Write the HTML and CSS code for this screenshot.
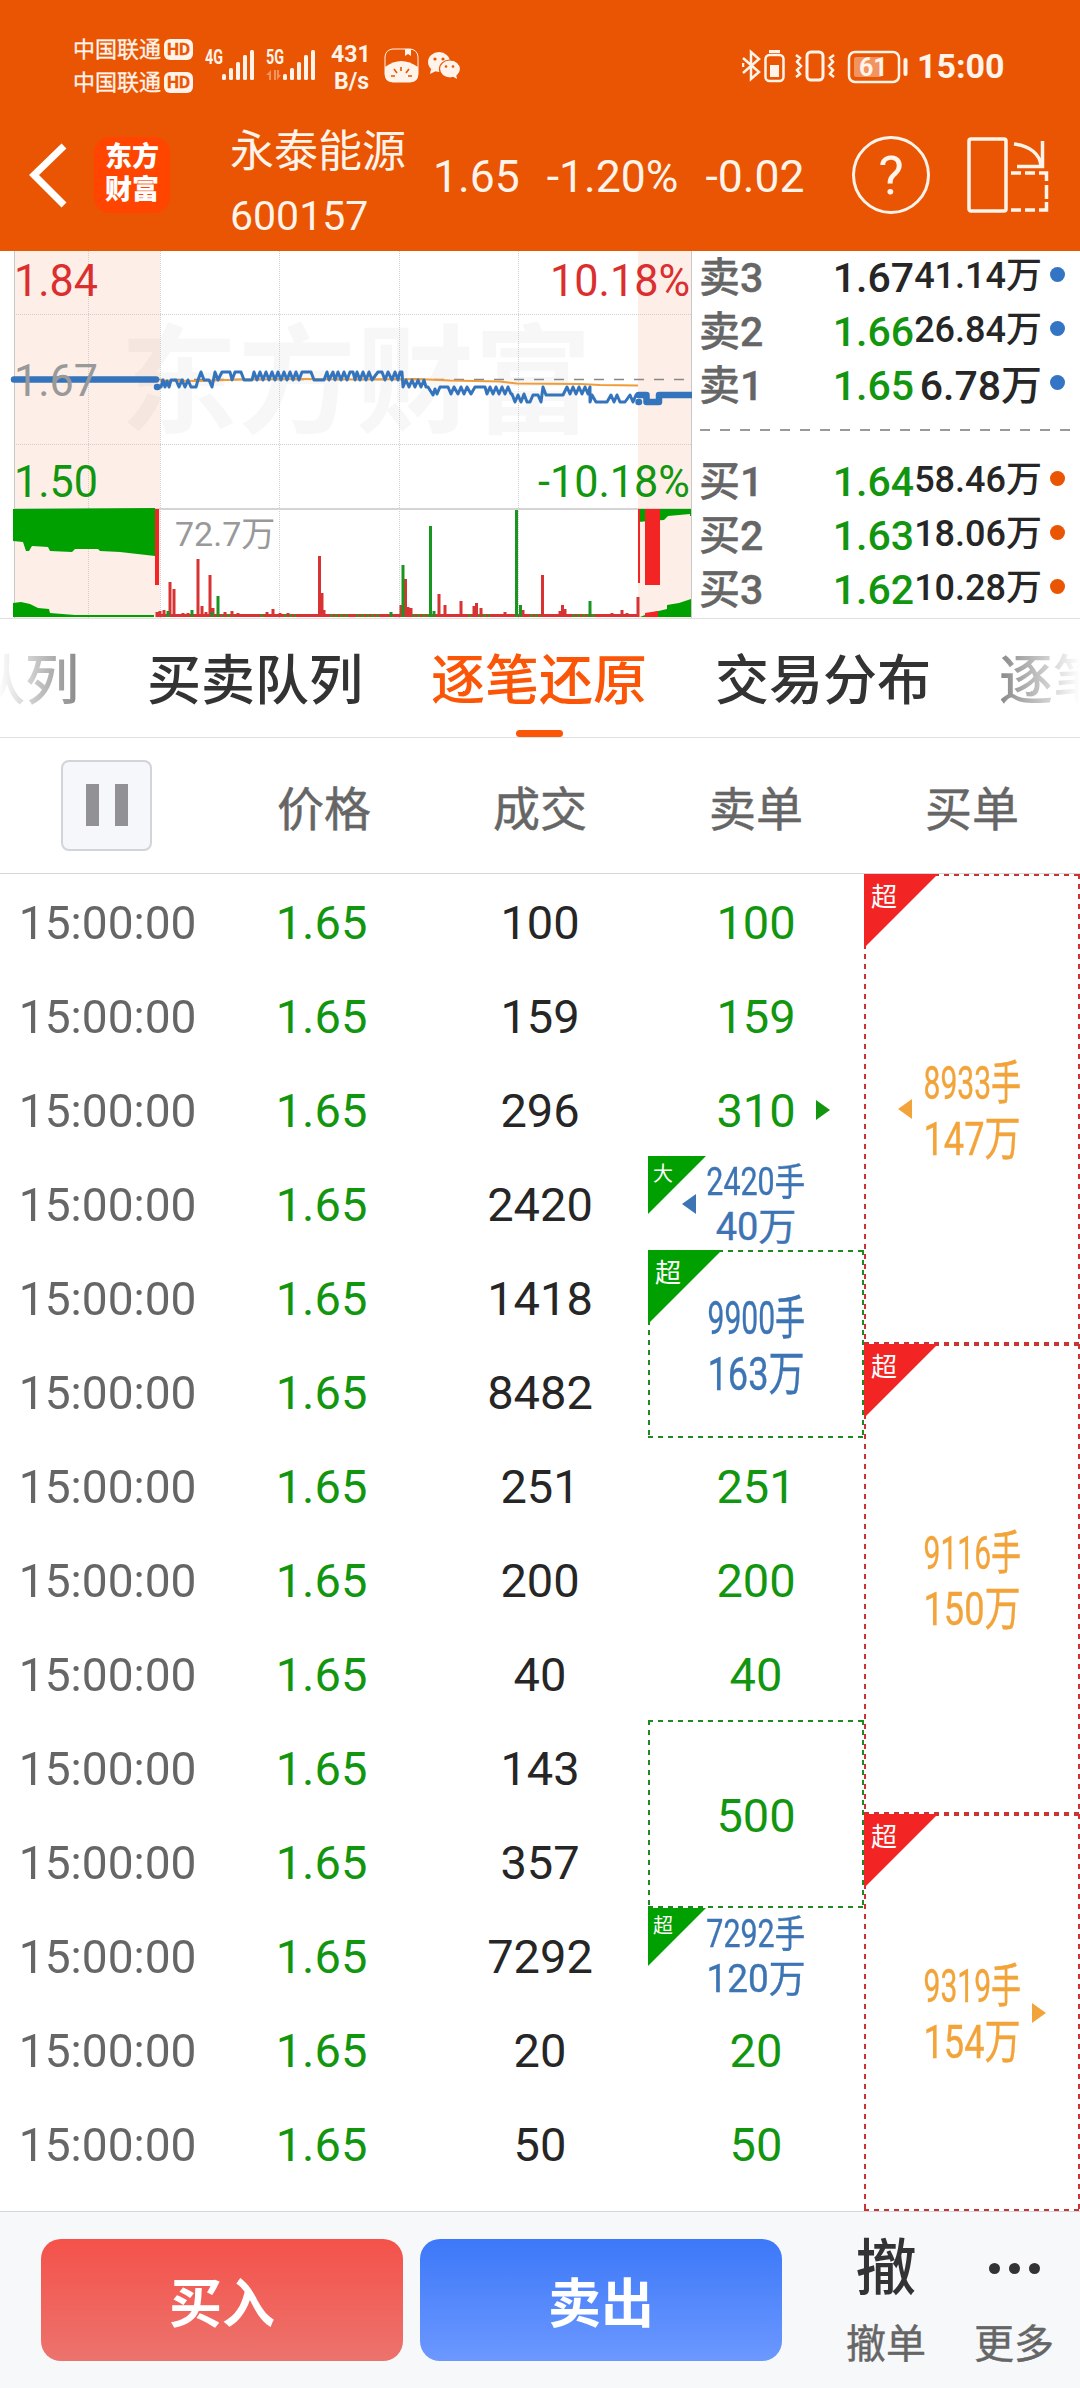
FILE: index.html
```html
<!DOCTYPE html>
<html lang="zh-CN">
<head>
    <meta charset="UTF-8">
    <meta name="viewport" content="width=device-width, initial-scale=1.0">
    <title>永泰能源 600157</title>
    <link rel="stylesheet" href="styles.css">
</head>
<body>
    <header class="header">
        <div class="status-bar">
            <div class="carriers">
                <div class="carrier">中国联通<span class="hd">HD</span></div>
                <div class="carrier">中国联通<span class="hd">HD</span></div>
            </div>
            <svg class="signals" width="114" height="36" viewBox="0 0 114 36" fill="#fff3ea">
                <text x="0" y="17" class="net" textLength="18" lengthAdjust="spacingAndGlyphs">4G</text>
                <rect x="17" y="27" width="4" height="6" rx="1.5"/>
                <rect x="24" y="21" width="4" height="12" rx="1.5"/>
                <rect x="31" y="15" width="4" height="18" rx="1.5"/>
                <rect x="38" y="8" width="4" height="25" rx="1.5"/>
                <rect x="45" y="3" width="4" height="30" rx="1.5"/>
                <text x="61" y="17" class="net" textLength="18" lengthAdjust="spacingAndGlyphs">5G</text>
                <path d="M66 33V23l-5 5h3v5zM69 23v10h2V23zM72 23v10l4-5h-2v-5z" opacity=".4"/>
                <rect x="78" y="27" width="4" height="6" rx="1.5"/>
                <rect x="85" y="21" width="4" height="12" rx="1.5"/>
                <rect x="92" y="15" width="4" height="18" rx="1.5"/>
                <rect x="99" y="8" width="4" height="25" rx="1.5"/>
                <rect x="106" y="3" width="4" height="30" rx="1.5"/>
            </svg>
            <div class="speed">431<br>B/s</div>
            <svg class="apps" width="78" height="36" viewBox="0 0 78 36" fill="#fff3ea">
                <rect x="1" y="2" width="33" height="33" rx="8" fill="none" stroke="#fff3ea"/>
                <path d="M21 2h6v7l-3-2-3 2z"/>
                <path d="M1 20Q17 8 34 20v8q0 7-7 7H8q-7 0-7-7z"/>
                <path d="M17 20v4M10 22l3 4M25 22l-3 4M7 29h4M28 29h-4" stroke="#e95502" stroke-width="1.6"/>
                <ellipse cx="55" cy="15" rx="11" ry="10"/>
                <path d="M47 22l-1 5 6-3z"/>
                <ellipse cx="66" cy="22" rx="10.5" ry="9" stroke="#e95502" stroke-width="1.2"/>
                <path d="M68 29l5 3-1-5z"/>
                <g fill="#e95502"><circle cx="51" cy="12" r="1.6"/><circle cx="59" cy="12" r="1.6"/><circle cx="62" cy="19.5" r="1.3"/><circle cx="69" cy="19.5" r="1.3"/></g>
            </svg>
            <svg class="devices" width="166" height="36" viewBox="0 0 166 36" fill="none" stroke="#fff3ea" stroke-width="2.5">
                <path d="M1 10l16 14-8 7V4l8 7L1 25M1 15v4"/>
                <rect x="23.5" y="7" width="18" height="26" rx="4"/>
                <path d="M27 3.5h11" stroke-width="3"/>
                <rect x="28" y="17" width="9" height="12" fill="#fff3ea" stroke="none"/>
                <rect x="65" y="4" width="16" height="28" rx="4" stroke-width="3"/>
                <path d="M54 7l4 3-3 4 4 4-4 4 3 4-4 3M92 7l-4 3 3 4-4 4 4 4-3 4 4 3"/>
                <rect x="107" y="4" width="50" height="30" rx="6"/>
                <rect x="112" y="9" width="28" height="20" rx="2" fill="#fff3ea" stroke="none" opacity=".4"/>
                <path d="M163.5 12v14" stroke-width="4" stroke-linecap="round"/>
                <text x="117" y="27.5" class="level">61</text>
            </svg>
            <div class="clock">15:00</div>
        </div>
        <div class="title-bar">
            <svg class="back" width="40" height="66" viewBox="0 0 40 66" fill="none" stroke="#fff" stroke-width="7">
                <path d="M36 4L6 33l30 30"/>
            </svg>
            <div class="logo">东方<br>财富</div>
            <div class="stock">
                <div class="stock-name">永泰能源</div>
                <div class="stock-code">600157</div>
            </div>
            <div class="quote">
                <span>1.65</span>
                <span>-1.20%</span>
                <span>-0.02</span>
            </div>
            <div class="help">?</div>
            <svg class="rotate" width="84" height="78" viewBox="0 0 84 78" fill="none" stroke="#fff3ea" stroke-width="3.5">
                <rect x="2" y="3" width="37" height="72" rx="2"/>
                <path d="M47 8c16 2 26 10 27 22M75.5 5v25.500H50" stroke-width="3.5"/>
                <path d="M44 37h10M58 37h10M72 37h7.500v8M79.500 49v14M79.500 66v8H72M68 74H58M54 74H44"/>
            </svg>
        </div>
    </header>

    <section class="market">
        <svg class="chart" width="692" height="367" viewBox="0 251 692 367">
            <!-- call auction periods -->
            <path d="M14 251h146v367H14zM638 251h53v367h-53z" fill="#fdeee7"/>
            <text class="watermark" x="120" y="424">东方财富</text>
            <path d="M88.500 251v367M160.500 251v367M279.500 251v367M399.500 251v367M518.500 251v367M14 314.500h677M14 444.500h677" stroke="#cfcfcf" stroke-dasharray="1 1"/>
            <path d="M14.500 251v367M691.500 251v367" stroke="#c8c8c8"/>
            <path d="M14 509h677" stroke="#d4d4d4" stroke-width="2"/>
            <path d="M154 379.500h537" stroke="#888" stroke-width="1.5" stroke-dasharray="10 10"/>
            <path d="M160 380.500L200 381l40-1.500 60-.5 60 .5 57-.5 33 1.500 50 1 17 2 63 .5 20 1 38 .5" fill="none" stroke="#f09c38" stroke-width="2"/>
            <polyline class="price" points="157,387 161,387 163,380 165,387 167,381 169,387 171,380 176,380 179,387 182,380 185,387 188,380 191,387 196,387 198,380 201,372 204,380 209,380 212,387 215,372 218,380 222,372 230,372 232,380 235,372 241,372 244,380 252,380 254,372 257,380 260,372 263,380 266,372 269,380 272,372 275,380 278,372 281,380 284,372 287,380 290,372 293,380 296,372 299,380 302,372 311,372 314,380 324,380 327,372 329,380 333,372 335,380 338,372 341,380 344,372 347,380 350,372 353,372 355,380 357,372 360,380 363,372 366,380 369,372 372,380 378,372 382,372 385,380 388,372 392,380 395,372 398,380 400,372 402,372 403,387 406,380 409,387 412,380 415,387 418,380 421,387 424,380 426,387 428,387 433,395 435,389 437,394 440,387 448,387 451,394 454,387 458,394 461,387 464,394 467,387 471,394 475,387 485,387 487,394 490,387 493,394 496,387 499,394 502,387 505,394 508,387 511,394 512,394 515,402 518,395 521,402 524,394 527,402 530,402 533,395 538,395 541,402 543,387 546,395 563,395 567,387 570,394 573,387 576,394 579,387 582,394 585,387 588,394 590,387 590,402 592,395 596,402 607,402 611,395 614,402 617,395 620,402 625,402 630,395 633,402 636,395 638,395"/>
            <g class="auction">
                <path d="M14 379.500h142M157 387h.5M638.500 395h8v7h12.500v-7h32M638.500 402h.5"/>
            </g>

            <!-- volume -->
            <path d="M13 509v32l10 1 3 9h3l3-5 16 1 2 4 22 1 3-3h23l2 2 20 1 35 4v-48zM13 617v-14l8-1 9 2 8 4 11 1 1 4 25 2h79v2zM638 509v13l12-1 14-1 4-4 22-2v2h1v-7zM640 617l10-4 17-4v-4l12-2 12-4v18z" fill="#00a000"/>
            <path d="M155 509h4v76h-4zM638 509h2v74h-2zM645 509h15v76h-15zM645 613l13-2v6h-13z" fill="#f22424"/>
            <path d="M159 615.500h480" stroke="#d83232" stroke-width="3"/>
            <path d="M222 615.500h12M260 615.500h10M284 615.500h12M330 615.500h18M356 615.500h24M412 615.500h20M468 615.500h22M530 615.500h14M572 615.500h24" stroke="#4a8a1c" stroke-width="3" stroke-dasharray="3 2"/>
            <path d="M157 617v-5M160 617v-6M164 617v-7M170 617v-35M174 617v-28M183 617v-4M188 617v-4M198 617v-58M202 617v-11M206 617v-5M210 617v-42M213 617v-9M225 617v-5M232 617v-6M238 617v-4M267 617v-5M273 617v-8M280 617v-4M288 617v-4M319.500 617v-61M322 617v-24M324 617v-7M401 617v-12M405.500 617v-38M408 617v-10M411 617v-9M439 617v-23M445 617v-12M461 617v-16M474 617v-11M476.500 617v-14M481 617v-9M505 617v-5M523 617v-7M542.500 617v-42M560 617v-6M562.500 617v-12M565 617v-8M612 617v-4M622 617v-7M627 617v-4M638 617v-20" stroke="#d83232" stroke-width="3"/>
            <path d="M168 617v-6M192 617v-7M212 617v-5M218 617v-21M391 617v-5M403 617v-52M430.500 617v-91M434 617v-6M516.500 617v-107M520.500 617v-12M590 617v-16" stroke="#1a9620" stroke-width="3"/>

            <text class="label red" x="14" y="296" textLength="84" lengthAdjust="spacingAndGlyphs">1.84</text>
            <text class="label gray" x="14" y="396" textLength="84" lengthAdjust="spacingAndGlyphs">1.67</text>
            <text class="label green" x="14" y="497" textLength="84" lengthAdjust="spacingAndGlyphs">1.50</text>
            <text class="label red" x="550" y="296" textLength="140" lengthAdjust="spacingAndGlyphs">10.18%</text>
            <text class="label green" x="538" y="497" textLength="152" lengthAdjust="spacingAndGlyphs">-10.18%</text>
            <text class="label small gray" x="175" y="546">72.7万</text>
        </svg>
        <div class="order-book">
            <div class="level-row"><span class="side">卖3</span><span class="price-cell">1.67</span><span class="amount">41.14万</span><i class="dot"></i></div>
            <div class="level-row"><span class="side">卖2</span><span class="price-cell down">1.66</span><span class="amount">26.84万</span><i class="dot"></i></div>
            <div class="level-row"><span class="side">卖1</span><span class="price-cell down">1.65</span><span class="amount wide">6.78万</span><i class="dot"></i></div>
            <div class="book-divider"></div>
            <div class="level-row"><span class="side">买1</span><span class="price-cell down">1.64</span><span class="amount">58.46万</span><i class="dot buy"></i></div>
            <div class="level-row"><span class="side">买2</span><span class="price-cell down">1.63</span><span class="amount">18.06万</span><i class="dot buy"></i></div>
            <div class="level-row"><span class="side">买3</span><span class="price-cell down">1.62</span><span class="amount">10.28万</span><i class="dot buy"></i></div>
        </div>
    </section>

    <nav class="tabs">
        <span class="tab fade-left">队列</span>
        <span class="tab">买卖队列</span>
        <span class="tab active">逐笔还原</span>
        <span class="tab">交易分布</span>
        <span class="tab fade-right">逐笔</span>
    </nav>

    <div class="table-head">
        <div class="head-cell"><button class="pause"><i></i><i></i></button></div>
        <div class="head-cell">价格</div>
        <div class="head-cell">成交</div>
        <div class="head-cell">卖单</div>
        <div class="head-cell">买单</div>
    </div>

    <main class="ticks">
        <div class="col time">
            <div class="cell"><span>15:00:00</span></div>
            <div class="cell"><span>15:00:00</span></div>
            <div class="cell"><span>15:00:00</span></div>
            <div class="cell"><span>15:00:00</span></div>
            <div class="cell"><span>15:00:00</span></div>
            <div class="cell"><span>15:00:00</span></div>
            <div class="cell"><span>15:00:00</span></div>
            <div class="cell"><span>15:00:00</span></div>
            <div class="cell"><span>15:00:00</span></div>
            <div class="cell"><span>15:00:00</span></div>
            <div class="cell"><span>15:00:00</span></div>
            <div class="cell"><span>15:00:00</span></div>
            <div class="cell"><span>15:00:00</span></div>
            <div class="cell"><span>15:00:00</span></div>
        </div>
        <div class="col last-price down">
            <div class="cell">1.65</div>
            <div class="cell">1.65</div>
            <div class="cell">1.65</div>
            <div class="cell">1.65</div>
            <div class="cell">1.65</div>
            <div class="cell">1.65</div>
            <div class="cell">1.65</div>
            <div class="cell">1.65</div>
            <div class="cell">1.65</div>
            <div class="cell">1.65</div>
            <div class="cell">1.65</div>
            <div class="cell">1.65</div>
            <div class="cell">1.65</div>
            <div class="cell">1.65</div>
        </div>
        <div class="col">
            <div class="cell">100</div>
            <div class="cell">159</div>
            <div class="cell">296</div>
            <div class="cell">2420</div>
            <div class="cell">1418</div>
            <div class="cell">8482</div>
            <div class="cell">251</div>
            <div class="cell">200</div>
            <div class="cell">40</div>
            <div class="cell">143</div>
            <div class="cell">357</div>
            <div class="cell">7292</div>
            <div class="cell">20</div>
            <div class="cell">50</div>
        </div>
        <div class="col down">
            <div class="cell">100</div>
            <div class="cell">159</div>
            <div class="cell">310<i class="arrow right sell-next"></i></div>
            <div class="cell big compact">
                <b class="flag">大</b><i class="arrow left sell-prev"></i>
                <span class="hand">2420手</span><span>40万</span>
            </div>
            <div class="cell big boxed two">
                <b class="flag">超</b>
                <span class="hand">9900手</span><span class="money">163万</span>
            </div>
            <div class="cell">251</div>
            <div class="cell">200</div>
            <div class="cell">40</div>
            <div class="cell boxed two">500</div>
            <div class="cell big compact">
                <b class="flag">超</b>
                <span class="hand">7292手</span><span class="money">120万</span>
            </div>
            <div class="cell">20</div>
            <div class="cell">50</div>
        </div>
        <div class="col buys">
            <div class="cell big boxed five">
                <b class="flag">超</b><i class="arrow left buy-prev"></i>
                <span class="hand">8933手</span><span class="money">147万</span>
            </div>
            <div class="cell big boxed five">
                <b class="flag">超</b>
                <span class="hand">9116手</span><span class="money">150万</span>
            </div>
            <div class="cell big boxed rest">
                <b class="flag">超</b><i class="arrow right buy-next"></i>
                <span class="hand">9319手</span><span class="money">154万</span>
            </div>
        </div>
    </main>

    <footer class="bottom-bar">
        <button class="trade buy-btn">买入</button>
        <button class="trade sell-btn">卖出</button>
        <div class="action">
            <div class="action-icon">撤</div>
            <div class="action-label">撤单</div>
        </div>
        <div class="action more">
            <div class="action-icon"><i></i><i></i><i></i></div>
            <div class="action-label">更多</div>
        </div>
    </footer>
</body>
</html>
```

FILE: styles.css
```css
* { box-sizing: border-box; }

body {
    margin: 0;
    width: 1080px;
    height: 2388px;
    overflow: hidden;
    background: #fff;
    color: #262626;
    font-family: Roboto, "Noto Sans CJK SC", sans-serif;
}

button {
    border: none;
    font-family: inherit;
    padding: 0;
}

svg { display: block; flex-shrink: 0; }

/* header */
.header {
    height: 251px;
    background: #e95502;
    color: #fff3ea;
}

.status-bar {
    height: 100px;
    padding: 33px 70px 0 73px;
    display: flex;
    align-items: flex-start;
}

.carriers { flex-shrink: 0; width: 121px; }

.carrier {
    display: flex;
    align-items: center;
    height: 33px;
    font-size: 22px;
    line-height: 33px;
    white-space: nowrap;
    -webkit-text-stroke: 0.3px;
}

.hd {
    flex-shrink: 0;
    width: 29px;
    height: 21px;
    margin-left: 3px;
    border-radius: 6px;
    background: #fff3ea;
    color: #e95502;
    font-size: 17px;
    font-weight: bold;
    line-height: 21px;
    text-align: center;
}

.signals { margin: 14px 0 0 11px; }
.net { font-size: 20px; font-weight: bold; }

.speed {
    width: 38px;
    margin: 8px 0 0 12px;
    font-size: 23px;
    font-weight: 700;
    line-height: 27px;
    text-align: right;
}

.apps { margin: 14px 0 0 15px; }
.devices { margin: 15px 0 0 280px; }

.level {
    fill: #fff3ea;
    stroke: none;
    font-size: 25px;
    font-weight: bold;
}

.clock {
    margin: 13px 0 0 9px;
    font-size: 34px;
    font-weight: 700;
    line-height: 40px;
}

.title-bar {
    height: 151px;
    padding-left: 28px;
    display: flex;
}

.back { margin-top: 42px; }

.logo {
    width: 76px;
    height: 76px;
    margin: 37px 0 0 26px;
    padding-top: 4px;
    border-radius: 16px;
    background: #ff4500;
    color: #fff;
    font-size: 27px;
    font-weight: 900;
    line-height: 33px;
    text-align: center;
}

.stock {
    width: 206px;
    margin-left: 60px;
    padding-top: 24px;
}

.stock-name { font-size: 44px; line-height: 56px; }
.stock-code { font-size: 41px; line-height: 72px; }

.quote {
    width: 418px;
    display: flex;
    gap: 27px;
    font-size: 44.5px;
    line-height: 154px;
    margin-left: -3px;
}

.help {
    width: 78px;
    height: 78px;
    margin: 36px 0 0 1px;
    border: 3px solid #fff3ea;
    border-radius: 50%;
    font-size: 54px;
    line-height: 73px;
    text-align: center;
}

.rotate { margin: 36px 0 0 37px; }

/* chart and order book */
.market {
    height: 368px;
    border-bottom: 1px solid #e0e0e0;
    display: flex;
}

.watermark {
    font-size: 118px;
    font-weight: 700;
    fill: #000;
    opacity: .026;
}

.price {
    fill: none;
    stroke: #3474bd;
    stroke-width: 3;
    stroke-linejoin: round;
}

.auction path {
    fill: none;
    stroke: #3474bd;
    stroke-width: 6.5;
    stroke-linecap: round;
    stroke-linejoin: round;
}

.label { font-size: 45px; }
.label.small { font-size: 34px; }
.red { fill: #db2f2f; }
.green { fill: #12960f; }
.gray { fill: #999; }

.order-book {
    flex: 1;
    padding-left: 7px;
}

.level-row {
    height: 54px;
    display: flex;
    font-size: 41px;
    font-weight: 500;
    line-height: 54px;
}

.side {
    width: 120px;
    color: #666;
    -webkit-text-stroke: 0.4px;
}

.price-cell { width: 95px; text-align: right; }
.down { color: #12960f; }

.amount {
    width: 128px;
    font-size: 36px;
    line-height: 51px;
    text-align: right;
    white-space: nowrap;
}

.amount.wide { font-size: 41px; line-height: 54px; }

.dot {
    width: 15px;
    height: 15px;
    margin: 16px 0 0 8px;
    border-radius: 50%;
    background: #3474c4;
}

.dot.buy { background: #e95502; }

.book-divider {
    height: 2px;
    margin: 16px 0 24px 1px;
    width: 370px;
    background: repeating-linear-gradient(90deg, #999 0 10px, transparent 10px 20px);
}

/* tabs */
.tabs {
    height: 119px;
    border-bottom: 1px solid #e0e0e0;
    display: flex;
    gap: 68px;
    overflow: hidden;
}

.tab {
    position: relative;
    flex-shrink: 0;
    font-size: 54px;
    font-weight: 500;
    line-height: 125px;
    color: #333;
}

.tab.active { color: #fb5607; }

.tab.active::after {
    content: "";
    position: absolute;
    left: 85px;
    top: 111px;
    width: 47px;
    height: 7px;
    border-radius: 4px;
    background: #fb5607;
}

.fade-left {
    margin-left: -29px;
    color: transparent;
    background: linear-gradient(90deg, #fff 25%, #888);
    background-clip: text;
}

.fade-right {
    color: transparent;
    background: linear-gradient(90deg, #888, #fff 75%);
    background-clip: text;
}

/* table */
.table-head {
    height: 136px;
    border-bottom: 1px solid #d6d6d6;
    display: grid;
    grid-template-columns: repeat(5, 216px);
}

.head-cell {
    display: flex;
    justify-content: center;
    align-items: center;
    padding-bottom: 1px;
    font-size: 47px;
    color: #666;
    -webkit-text-stroke: 0.5px;
}

.pause {
    width: 91px;
    height: 91px;
    margin-right: 3px;
    border: 2px solid #d1d4da;
    border-radius: 8px;
    background: #f6f7fb;
    display: flex;
    justify-content: center;
    align-items: center;
    gap: 16px;
}

.pause i {
    width: 13px;
    height: 42px;
    background: #919196;
}

.ticks {
    height: 1337px;
    display: grid;
    grid-template-columns: repeat(5, 216px);
}

.col {
    display: flex;
    flex-direction: column;
}

.cell {
    position: relative;
    height: 94px;
    padding-top: 3px;
    display: flex;
    flex-direction: column;
    flex-shrink: 0;
    align-items: center;
    justify-content: center;
    font-size: 47px;
    line-height: 56px;
    --line: #1f8a1f;
    --flag: #00a000;
}

.time { color: #666; }
.time span { transform: scaleX(0.98); }
.last-price { padding-right: 5px; }
.two { height: 188px; }
.five { height: 470px; }
.rest { height: 397px; }

.buys .cell {
    --line: #cc3333;
    --flag: #f22424;
    color: #f2a43a;
}

.boxed {
    background:
        repeating-linear-gradient(90deg, var(--line) 0 5px, transparent 5px 10px) 0 0 / 100% 2px no-repeat,
        repeating-linear-gradient(90deg, var(--line) 0 5px, transparent 5px 10px) 0 100% / 100% 2px no-repeat,
        repeating-linear-gradient(180deg, var(--line) 0 5px, transparent 5px 10px) 0 0 / 2px 100% no-repeat,
        repeating-linear-gradient(180deg, var(--line) 0 5px, transparent 5px 10px) 100% 0 / 2px 100% no-repeat;
}

.big {
    color: #3c74b4;
    -webkit-text-stroke: 0.4px;
}

.hand { transform: scaleX(0.64); }
.money { transform: scaleX(0.77); }

.compact { font-size: 38px; line-height: 45px; }
.compact .hand { transform: scaleX(0.8); }
.compact .money { transform: scaleX(0.97); }

.flag {
    position: absolute;
    top: 0;
    left: 0;
    width: 74px;
    height: 74px;
    padding-left: 7px;
    background: var(--flag);
    clip-path: polygon(0 0, 100% 0, 0 100%);
    color: #fff;
    font-size: 26px;
    font-weight: normal;
    line-height: 47px;
    -webkit-text-stroke: 0;
}

.compact .flag {
    width: 58px;
    height: 58px;
    padding-left: 5px;
    font-size: 20px;
    line-height: 36px;
}

.arrow {
    position: absolute;
    border: 10px solid transparent;
    border-width: 10px 0;
}

.arrow.right { border-left: 14px solid; }
.arrow.left { border-right: 14px solid; }
.sell-next { left: 168px; top: 38px; }
.sell-prev { left: 34px; top: 38px; }
.buy-prev { left: 34px; top: 225px; }
.buy-next { left: 168px; top: 189px; }

/* bottom bar */
.bottom-bar {
    height: 177px;
    padding: 27px 0 0 41px;
    border-top: 1px solid #d3d5d8;
    background: #f6f8fa;
    display: flex;
}

.trade {
    width: 362px;
    height: 122px;
    margin-right: 17px;
    border-radius: 20px;
    color: #fff;
    font-size: 53px;
    font-weight: bold;
}

.buy-btn { background: linear-gradient(#f4524a, #ec736d); }
.sell-btn { background: linear-gradient(#3c78f8, #6c98ff); }

.action {
    width: 128px;
    margin-left: 23px;
    text-align: center;
}

.action-icon {
    height: 58px;
    font-size: 61px;
    font-weight: 500;
    line-height: 61px;
    color: #333;
}

.action-label {
    font-size: 40px;
    line-height: 48px;
    margin-top: 24px;
    color: #666;
    -webkit-text-stroke: 0.4px;
}

.more { margin-left: 0; }

.more .action-icon {
    display: flex;
    justify-content: center;
    align-items: center;
    gap: 9px;
}

.more i {
    width: 11px;
    height: 11px;
    border-radius: 50%;
    background: #333;
}
```
